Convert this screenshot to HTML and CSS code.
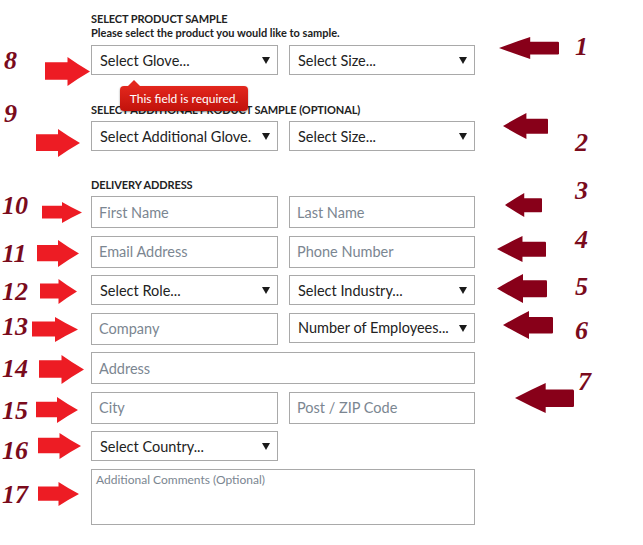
FILE: index.html
```html
<!DOCTYPE html>
<html lang="en">
<head>
<meta charset="utf-8">
<title>Sample request form</title>
<link rel="stylesheet" href="styles.css">
</head>
<body>
<div class="page">
  <form class="form">
    <h2 class="section-title">SELECT PRODUCT SAMPLE</h2>
    <p class="section-sub">Please select the product you would like to sample.</p>
    <div class="row first-row">
      <div class="select-wrap">
        <select class="field select"><option>Select Glove...</option></select>
        <div class="tooltip">This field is required.</div>
      </div>
      <div class="select-wrap"><select class="field select"><option>Select Size...</option></select></div>
    </div>

    <h2 class="section-title title-2">SELECT ADDITIONAL PRODUCT SAMPLE (OPTIONAL)</h2>
    <div class="row">
      <div class="select-wrap"><select class="field select"><option>Select Additional Glove...</option></select></div>
      <div class="select-wrap"><select class="field select"><option>Select Size...</option></select></div>
    </div>

    <h2 class="section-title title-3">DELIVERY ADDRESS</h2>
    <div class="stack">
      <div class="row">
        <input class="field input" placeholder="First Name">
        <input class="field input" placeholder="Last Name">
      </div>
      <div class="row">
        <input class="field input" placeholder="Email Address">
        <input class="field input" placeholder="Phone Number">
      </div>
      <div class="row">
        <div class="select-wrap"><select class="field select"><option>Select Role...</option></select></div>
        <div class="select-wrap"><select class="field select"><option>Select Industry...</option></select></div>
      </div>
      <div class="row">
        <input class="field input" placeholder="Company">
        <div class="select-wrap"><select class="field select"><option>Number of Employees...</option></select></div>
      </div>
      <div class="row single">
        <input class="field input" placeholder="Address">
      </div>
      <div class="row">
        <input class="field input" placeholder="City">
        <input class="field input" placeholder="Post / ZIP Code">
      </div>
      <div class="row">
        <div class="select-wrap"><select class="field select"><option>Select Country...</option></select></div>
        <div></div>
      </div>
      <div class="row single">
        <textarea class="field textarea" placeholder="Additional Comments (Optional)"></textarea>
      </div>
    </div>
  </form>

  <div class="annotations">
    <svg class="arrow arrow-right" style="left:45px;top:57px;width:45px;height:29px" viewBox="0 0 100 60" preserveAspectRatio="none"><path d="M0,11 L50,11 L50,0 Q74,16 100,30 Q74,44 50,60 L50,47 L0,47 Z"/></svg>
    <svg class="arrow arrow-right" style="left:36px;top:129px;width:44px;height:28px" viewBox="0 0 100 60" preserveAspectRatio="none"><path d="M0,11 L50,11 L50,0 Q74,16 100,30 Q74,44 50,60 L50,47 L0,47 Z"/></svg>
    <svg class="arrow arrow-right" style="left:42px;top:202px;width:40px;height:21px" viewBox="0 0 100 60" preserveAspectRatio="none"><path d="M0,11 L50,11 L50,0 Q74,16 100,30 Q74,44 50,60 L50,47 L0,47 Z"/></svg>
    <svg class="arrow arrow-right" style="left:37px;top:240px;width:42px;height:27px" viewBox="0 0 100 60" preserveAspectRatio="none"><path d="M0,11 L50,11 L50,0 Q74,16 100,30 Q74,44 50,60 L50,47 L0,47 Z"/></svg>
    <svg class="arrow arrow-right" style="left:40px;top:279px;width:37px;height:25px" viewBox="0 0 100 60" preserveAspectRatio="none"><path d="M0,11 L50,11 L50,0 Q74,16 100,30 Q74,44 50,60 L50,47 L0,47 Z"/></svg>
    <svg class="arrow arrow-right" style="left:32px;top:317px;width:46px;height:25px" viewBox="0 0 100 60" preserveAspectRatio="none"><path d="M0,11 L50,11 L50,0 Q74,16 100,30 Q74,44 50,60 L50,47 L0,47 Z"/></svg>
    <svg class="arrow arrow-right" style="left:39px;top:355px;width:45px;height:29px" viewBox="0 0 100 60" preserveAspectRatio="none"><path d="M0,11 L50,11 L50,0 Q74,16 100,30 Q74,44 50,60 L50,47 L0,47 Z"/></svg>
    <svg class="arrow arrow-right" style="left:36px;top:397px;width:42px;height:26px" viewBox="0 0 100 60" preserveAspectRatio="none"><path d="M0,11 L50,11 L50,0 Q74,16 100,30 Q74,44 50,60 L50,47 L0,47 Z"/></svg>
    <svg class="arrow arrow-right" style="left:38px;top:433px;width:43px;height:26px" viewBox="0 0 100 60" preserveAspectRatio="none"><path d="M0,11 L50,11 L50,0 Q74,16 100,30 Q74,44 50,60 L50,47 L0,47 Z"/></svg>
    <svg class="arrow arrow-right" style="left:38px;top:482px;width:41px;height:24px" viewBox="0 0 100 60" preserveAspectRatio="none"><path d="M0,11 L50,11 L50,0 Q74,16 100,30 Q74,44 50,60 L50,47 L0,47 Z"/></svg>

    <svg class="arrow arrow-left" style="left:499px;top:37px;width:60px;height:22px" viewBox="0 0 100 60" preserveAspectRatio="none"><path d="M0,30 Q26,14 52,0 L52,13 L98,13 Q100,13 100,16 L100,46 Q100,48 98,48 L52,48 L52,60 Q26,46 0,30 Z"/></svg>
    <svg class="arrow arrow-left" style="left:503px;top:113px;width:45px;height:26px" viewBox="0 0 100 60" preserveAspectRatio="none"><path d="M0,30 Q26,14 52,0 L52,13 L98,13 Q100,13 100,16 L100,46 Q100,48 98,48 L52,48 L52,60 Q26,46 0,30 Z"/></svg>
    <svg class="arrow arrow-left" style="left:505px;top:193px;width:37px;height:24px" viewBox="0 0 100 60" preserveAspectRatio="none"><path d="M0,30 Q26,14 52,0 L52,13 L98,13 Q100,13 100,16 L100,46 Q100,48 98,48 L52,48 L52,60 Q26,46 0,30 Z"/></svg>
    <svg class="arrow arrow-left" style="left:497px;top:236px;width:49px;height:26px" viewBox="0 0 100 60" preserveAspectRatio="none"><path d="M0,30 Q26,14 52,0 L52,13 L98,13 Q100,13 100,16 L100,46 Q100,48 98,48 L52,48 L52,60 Q26,46 0,30 Z"/></svg>
    <svg class="arrow arrow-left" style="left:497px;top:274px;width:50px;height:29px" viewBox="0 0 100 60" preserveAspectRatio="none"><path d="M0,30 Q26,14 52,0 L52,13 L98,13 Q100,13 100,16 L100,46 Q100,48 98,48 L52,48 L52,60 Q26,46 0,30 Z"/></svg>
    <svg class="arrow arrow-left" style="left:503px;top:311px;width:50px;height:28px" viewBox="0 0 100 60" preserveAspectRatio="none"><path d="M0,30 Q26,14 52,0 L52,13 L98,13 Q100,13 100,16 L100,46 Q100,48 98,48 L52,48 L52,60 Q26,46 0,30 Z"/></svg>
    <svg class="arrow arrow-left" style="left:515px;top:383px;width:59px;height:30px" viewBox="0 0 100 60" preserveAspectRatio="none"><path d="M0,30 Q26,14 52,0 L52,13 L98,13 Q100,13 100,16 L100,46 Q100,48 98,48 L52,48 L52,60 Q26,46 0,30 Z"/></svg>

    <span class="num" style="left:4px;top:48px">8</span>
    <span class="num" style="left:4px;top:101px">9</span>
    <span class="num" style="left:2px;top:193px">10</span>
    <span class="num" style="left:2px;top:241px">11</span>
    <span class="num" style="left:2px;top:279px">12</span>
    <span class="num" style="left:2px;top:314px">13</span>
    <span class="num" style="left:2px;top:356px">14</span>
    <span class="num" style="left:2px;top:398px">15</span>
    <span class="num" style="left:2px;top:438px">16</span>
    <span class="num" style="left:2px;top:482px">17</span>

    <span class="num" style="left:575px;top:34px">1</span>
    <span class="num" style="left:575px;top:130px">2</span>
    <span class="num" style="left:575px;top:178px">3</span>
    <span class="num" style="left:575px;top:227px">4</span>
    <span class="num" style="left:575px;top:274px">5</span>
    <span class="num" style="left:575px;top:318px">6</span>
    <span class="num" style="left:578px;top:369px">7</span>
  </div>
</div>
</body>
</html>
```

FILE: styles.css
```css
* { box-sizing: border-box; }

html, body {
  margin: 0;
  padding: 0;
  background: #ffffff;
}

.page {
  position: relative;
  width: 643px;
  height: 545px;
  overflow: hidden;
  font-family: Lato, "Open Sans", sans-serif;
}

.form {
  width: 384px;
  margin: 0 0 0 91px;
  padding-top: 12px;
}

.section-title {
  margin: 0;
  font-size: 11px;
  line-height: 13px;
  font-weight: 700;
  color: #222;
  letter-spacing: -0.1px;
}

.title-2 { margin-top: 28px; }
.title-3 { margin-top: 27px; }

.section-sub {
  margin: 2px 0 0;
  font-size: 11px;
  line-height: 12px;
  font-weight: 700;
  color: #222;
}

.row {
  display: grid;
  grid-template-columns: 187px 186px;
  column-gap: 11px;
  margin-top: 5px;
}

.first-row { margin-top: 6px; }

.row.single { grid-template-columns: 1fr; }

.stack {
  display: flex;
  flex-direction: column;
  row-gap: 7.5px;
  margin-top: 5px;
}

.stack .row { margin-top: 0; }

.field {
  display: block;
  width: 100%;
  margin: 0;
  border: 1px solid #a9a9a9;
  border-radius: 0;
  background: #fff;
  font-family: Lato, "Open Sans", sans-serif;
  font-size: 14.5px;
  outline: none;
}

.input {
  height: 32px;
  padding: 0 7px;
  color: #222;
}

.input::placeholder,
.textarea::placeholder {
  color: #7b8691;
  opacity: 1;
}

.select-wrap {
  position: relative;
}

.select-wrap::after {
  content: "";
  position: absolute;
  right: 8px;
  top: 12px;
  width: 0;
  height: 0;
  border-left: 4px solid transparent;
  border-right: 4px solid transparent;
  border-top: 7px solid #1a1a1a;
  pointer-events: none;
}

.select {
  -webkit-appearance: none;
  appearance: none;
  height: 30px;
  padding: 0 25px 0 8px;
  color: #222;
  white-space: nowrap;
  overflow: hidden;
  text-overflow: clip;
}

.textarea {
  height: 56px;
  padding: 3px 4px;
  resize: none;
  font-size: 12px;
  line-height: 14px;
}

.tooltip {
  position: absolute;
  left: 29px;
  top: 41px;
  width: 128px;
  height: 25px;
  border-radius: 4px;
  background: linear-gradient(#e3271d, #c1120b);
  box-shadow: 0 1px 2px rgba(0, 0, 0, 0.45);
  color: #fff;
  font-size: 12px;
  line-height: 25px;
  text-align: center;
  z-index: 2;
}

.tooltip::before {
  content: "";
  position: absolute;
  left: 8px;
  top: -6px;
  border-left: 6px solid transparent;
  border-right: 6px solid transparent;
  border-bottom: 6px solid #e3271d;
}

.annotations {
  position: absolute;
  left: 0;
  top: 0;
  width: 643px;
  height: 545px;
  pointer-events: none;
}

.arrow {
  position: absolute;
  display: block;
}

.arrow-right path { fill: #ed1c24; }
.arrow-left path { fill: #880019; }

.num {
  position: absolute;
  font-family: "Liberation Serif", serif;
  font-style: italic;
  font-weight: 700;
  font-size: 26px;
  line-height: 26px;
  color: #7a0b1c;
}
```
